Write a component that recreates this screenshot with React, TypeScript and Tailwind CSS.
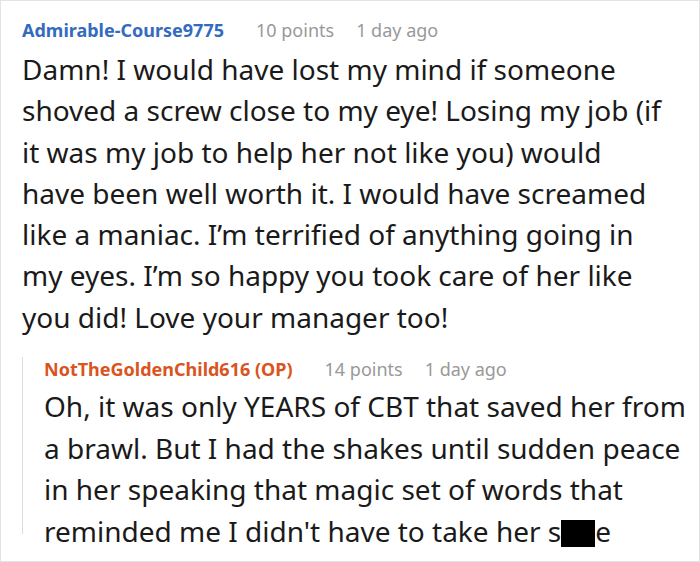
import React from "react";

function Meta({ name, color, points }: { name: string; color: string; points: string }) {
  return (
    <div className="flex items-center h-6 text-[18px] leading-6 whitespace-nowrap">
      <span className={`font-bold ${color}`}>{name}</span>
      <span className="ml-[32px] text-[#999999]">{points}</span>
      <span className="ml-[22px] text-[#999999]">1 day ago</span>
    </div>
  );
}

function Lines({ lines, lh }: { lines: React.ReactNode[]; lh: string }) {
  return (
    <div className={`text-[28px] whitespace-nowrap ${lh}`}>
      {lines.map((l, i) => (
        <div key={i}>{l}</div>
      ))}
    </div>
  );
}

export default function App() {
  return (
    <div
      className="w-[700px] h-[562px] border border-[#e3e3e3] bg-white overflow-hidden text-[#1a1a1a]"
      style={{ fontFamily: '"Noto Sans", "Open Sans", sans-serif' }}
    >
      <div className="pl-[21px] pt-[17px]">
        <Meta name="Admirable-Course9775" color="text-[#336bbd]" points="10 points" />
        <div className="mt-[7px]">
          <Lines
            lh="leading-[41.3px]"
            lines={[
              "Damn! I would have lost my mind if someone",
              "shoved a screw close to my eye! Losing my job (if",
              "it was my job to help her not like you) would",
              "have been well worth it. I would have screamed",
              "like a maniac. I’m terrified of anything going in",
              "my eyes. I’m so happy you took care of her like",
              "you did! Love your manager too!",
            ]}
          />
        </div>
        <div className="mt-[30px] border-l border-[#dddddd] h-[177px] pl-[21px]">
          <div className="-mt-[11px]">
            <Meta name="NotTheGoldenChild616 (OP)" color="text-[#d9541e]" points="14 points" />
          </div>
          <div className="mt-[5px]">
            <Lines
              lh="leading-[41.5px]"
              lines={[
                "Oh, it was only YEARS of CBT that saved her from",
                "a brawl. But I had the shakes until sudden peace",
                "in her speaking that magic set of words that",
                <>
                  reminded me I didn't have to take her s
                  <span className="inline-block w-[34px] h-[27px] bg-black align-[-5px]"></span>e
                </>,
              ]}
            />
          </div>
        </div>
      </div>
    </div>
  );
}
